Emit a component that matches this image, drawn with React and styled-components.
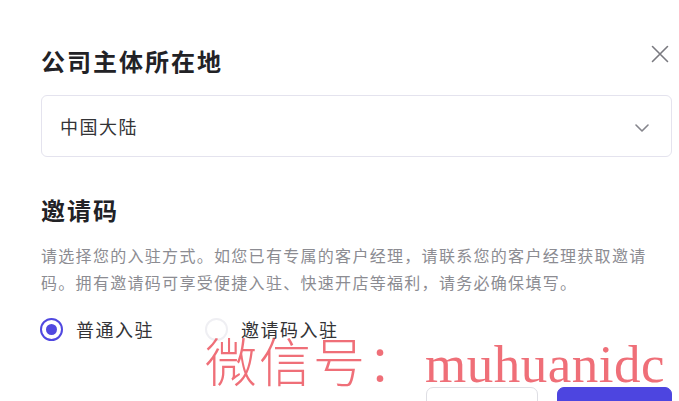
import React, { useState } from "react";
import styled, { createGlobalStyle } from "styled-components";

const GlobalStyle = createGlobalStyle`
  html, body {
    margin: 0;
    padding: 0;
    background: #ffffff;
  }
  body {
    font-family: "Noto Sans CJK SC", "Noto Sans", sans-serif;
    overflow: hidden;
  }
`;

const Dialog = styled.div`
  position: relative;
  width: 679px;
  height: 401px;
  box-sizing: border-box;
  padding: 44px 7px 0 41px;
  overflow: hidden;
`;

const Header = styled.div`
  display: flex;
  align-items: center;
  justify-content: space-between;
  height: 34px;
`;

const Title = styled.h2`
  margin: 0;
  font-size: 24px;
  line-height: 34px;
  font-weight: 600;
  letter-spacing: 2px;
  color: #222226;
`;

const CloseButton = styled.button`
  display: flex;
  align-items: center;
  justify-content: center;
  width: 24px;
  height: 24px;
  margin-right: 0;
  margin-top: -15px;
  padding: 0;
  border: none;
  background: none;
  color: #7a7a80;
  cursor: pointer;
`;

const Select = styled.div`
  display: flex;
  align-items: center;
  justify-content: space-between;
  height: 62px;
  box-sizing: border-box;
  margin-top: 17px;
  padding: 0 22px 0 18px;
  border: 1px solid #e4e3ee;
  border-radius: 6px;
  font-size: 18px;
  letter-spacing: 1.5px;
  color: #333336;
`;

const Chevron = styled.span`
  display: flex;
  color: #85858c;
  margin-top: 4px;
`;

const SectionTitle = styled(Title)`
  margin-top: 36px;
`;

const Description = styled.p`
  margin: 15px 0 0;
  font-size: 16px;
  line-height: 27px;
  letter-spacing: 1.3px;
  color: #8c8c92;
`;

const RadioGroup = styled.div`
  display: flex;
  align-items: center;
  gap: 52px;
  margin-top: 20px;
`;

const RadioOption = styled.label`
  display: flex;
  align-items: center;
  gap: 13px;
  font-size: 18px;
  line-height: 26px;
  letter-spacing: 1.5px;
  color: #333336;
  cursor: pointer;
`;

const RadioCircle = styled.span`
  position: relative;
  width: 23px;
  height: 23px;
  margin-left: -1px;
  box-sizing: border-box;
  border-radius: 50%;
  border: 2px solid ${(p) => (p.$checked ? "#5048e0" : "#efeff3")};
  &::after {
    content: "";
    position: absolute;
    top: 50%;
    left: 50%;
    width: 11px;
    height: 11px;
    margin: -5.5px 0 0 -5.5px;
    border-radius: 50%;
    background: #5048e0;
    display: ${(p) => (p.$checked ? "block" : "none")};
  }
`;

const Footer = styled.div`
  display: flex;
  justify-content: flex-end;
  gap: 19px;
  margin-top: 45px;
`;

const Button = styled.button`
  width: ${(p) => (p.$primary ? "115px" : "112px")};
  height: 46px;
  border-radius: 7px;
  font-family: inherit;
  font-size: 16px;
  border: 1px solid ${(p) => (p.$primary ? "#4d45e0" : "#dedee4")};
  background: ${(p) => (p.$primary ? "#4d45e0" : "#ffffff")};
  color: ${(p) => (p.$primary ? "#ffffff" : "#333336")};
`;

const Watermark = styled.div`
  position: absolute;
  left: 205px;
  top: 322px;
  display: flex;
  align-items: baseline;
  color: rgba(236, 86, 96, 0.85);
  pointer-events: none;
  white-space: nowrap;
`;

const WatermarkCJK = styled.span`
  font-family: "Noto Sans CJK SC", sans-serif;
  font-size: 52px;
  font-weight: 300;
  letter-spacing: 2px;
`;

const WatermarkLatin = styled.span`
  font-family: "Liberation Serif", serif;
  font-size: 53px;
  letter-spacing: 0.5px;
  margin-left: 4px;
`;

const App = () => {
  const [mode, setMode] = useState("normal");
  return (
    <>
      <GlobalStyle />
      <Dialog>
        <Header>
          <Title>公司主体所在地</Title>
          <CloseButton aria-label="关闭">
            <svg width="18" height="18" viewBox="0 0 18 18" fill="none">
              <path d="M1.5 1.5L16.5 16.5M16.5 1.5L1.5 16.5" stroke="currentColor" strokeWidth="1.6" strokeLinecap="round" />
            </svg>
          </CloseButton>
        </Header>
        <Select>
          <span>中国大陆</span>
          <Chevron>
            <svg width="14" height="8" viewBox="0 0 14 8" fill="none">
              <path d="M1 1L7 7L13 1" stroke="currentColor" strokeWidth="1.6" strokeLinecap="round" strokeLinejoin="round" />
            </svg>
          </Chevron>
        </Select>
        <SectionTitle>邀请码</SectionTitle>
        <Description>
          请选择您的入驻方式。如您已有专属的客户经理，请联系您的客户经理获取邀请码。拥有邀请码可享受便捷入驻、快速开店等福利，请务必确保填写。
        </Description>
        <RadioGroup>
          <RadioOption onClick={() => setMode("normal")}>
            <RadioCircle $checked={mode === "normal"} />
            普通入驻
          </RadioOption>
          <RadioOption onClick={() => setMode("invite")}>
            <RadioCircle $checked={mode === "invite"} />
            邀请码入驻
          </RadioOption>
        </RadioGroup>
        <Footer>
          <Button>取消</Button>
          <Button $primary>下一步</Button>
        </Footer>
        <Watermark>
          <WatermarkCJK>微信号：</WatermarkCJK>
          <WatermarkLatin>muhuanidc</WatermarkLatin>
        </Watermark>
      </Dialog>
    </>
  );
};

export default App;
